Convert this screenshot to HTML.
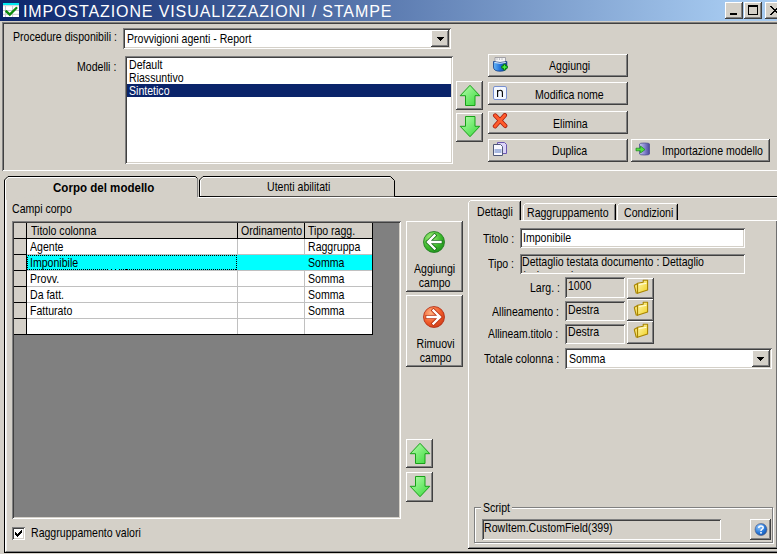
<!DOCTYPE html>
<html><head><meta charset="utf-8">
<style>
*{box-sizing:border-box;margin:0;padding:0}
html,body{width:777px;height:554px;overflow:hidden;background:#d4d0c8}
body{position:relative;font-family:"Liberation Sans",sans-serif;font-size:11px;color:#000}
.a{position:absolute}
.t{position:absolute;font-size:11px;line-height:13px;white-space:pre;transform-origin:0 0;transform:scale(0.96,1.1);margin-top:-1px}
.sunk{position:absolute;box-shadow:inset 1px 1px #808080,inset -1px -1px #fff,inset 2px 2px #404040,inset -2px -2px #d4d0c8}
.btn{position:absolute;background:#d4d0c8;box-shadow:inset -1px -1px #404040,inset 1px 1px #fff,inset -2px -2px #808080}
.etch{position:absolute;border:1px solid #808080;box-shadow:inset 1px 1px #fff,1px 1px #fff}
</style></head><body>

<!-- title bar -->
<div class="a" style="left:0;top:0;width:777px;height:21px;background:linear-gradient(to right,#0a246a 0px,#a6caf0 735px,#a6caf0 777px)"></div>
<svg class="a" style="left:3px;top:3px" width="16" height="14" viewBox="0 0 16 14">
<rect x="0" y="0" width="16" height="14" fill="#fff"/>
<rect x="0" y="0" width="16" height="2.4" fill="#00e8f0"/>
<path d="M0 2.8H16" stroke="#f0c8c8" stroke-width="0.8"/>
<path d="M0 7.5H16M0 11.3H16M2.5 3V14M9.6 3V14" stroke="#c8c8d0" stroke-width="1"/>
<path d="M3.3 8.3L6.8 11.6L13.4 5" stroke="#0c8a0c" stroke-width="2.4" fill="none" stroke-linecap="round"/>
</svg>
<div class="t" style="left:23px;top:2px;font-size:16px;line-height:19px;color:#fff;letter-spacing:0.89px;transform:none;margin-top:0">IMPOSTAZIONE VISUALIZZAZIONI / STAMPE</div>
<div class="btn" style="left:725px;top:2px;width:18px;height:17px"><div class="a" style="left:5px;top:11px;width:7px;height:2px;background:#000"></div></div>
<div class="btn" style="left:744px;top:2px;width:18px;height:17px"><div class="a" style="left:4px;top:3px;width:10px;height:10px;border:1px solid #000;border-top-width:2px"></div></div>
<div class="btn" style="left:765px;top:2px;width:18px;height:17px"><svg class="a" style="left:5px;top:4px" width="10" height="9" shape-rendering="crispEdges"><path d="M0 0h2v1h-2zM8 0h2v1h-2zM1 1h2v1h-2zM7 1h2v1h-2zM2 2h2v1h-2zM6 2h2v1h-2zM3 3h2v1h-2zM5 3h2v1h-2zM4 4h2v1h-2zM4 4h2v1h-2zM5 5h2v1h-2zM3 5h2v1h-2zM6 6h2v1h-2zM2 6h2v1h-2zM7 7h2v1h-2zM1 7h2v1h-2zM8 8h2v1h-2zM0 8h2v1h-2z" fill="#000"/></svg></div>

<!-- top panel -->
<div class="sunk" style="left:2px;top:22px;width:800px;height:149px"></div>
<div class="t" style="left:13px;top:31px">Procedure disponibili :</div>
<div class="sunk" style="left:123px;top:28px;width:328px;height:21px;background:#fff"></div>
<div class="btn" style="left:431px;top:30px;width:18px;height:17px"><svg class="a" style="left:6px;top:7px" width="7" height="4" shape-rendering="crispEdges"><path d="M0 0h7v1h-7zM1 1h5v1h-5zM2 2h3v1h-3zM3 3h1v1h-1z" fill="#000"/></svg></div>
<div class="t" style="left:127px;top:33px">Provvigioni agenti - Report</div>

<div class="t" style="left:77px;top:61px">Modelli :</div>
<div class="sunk" style="left:125px;top:56px;width:328px;height:108px;background:#fff"></div>
<div class="a" style="left:127px;top:84px;width:324px;height:13px;background:#0a246a"></div>
<div class="t" style="left:129px;top:59px">Default</div>
<div class="t" style="left:129px;top:72px">Riassuntivo</div>
<div class="t" style="left:129px;top:85px;color:#fff">Sintetico</div>

<!-- up/down top -->
<div class="btn" style="left:456px;top:81px;width:27px;height:29px" id="upTop"></div>
<div class="btn" style="left:456px;top:113px;width:27px;height:29px" id="dnTop"></div>

<!-- buttons -->
<div class="btn" style="left:488px;top:54px;width:140px;height:23px"></div>
<div class="t" style="left:549px;top:60px">Aggiungi</div>
<div class="btn" style="left:488px;top:82px;width:140px;height:23px"></div>
<div class="t" style="left:535px;top:89px">Modifica nome</div>
<div class="btn" style="left:488px;top:111px;width:140px;height:23px"></div>
<div class="t" style="left:553px;top:118px">Elimina</div>
<div class="btn" style="left:488px;top:139px;width:140px;height:23px"></div>
<div class="t" style="left:552px;top:145px">Duplica</div>
<div class="btn" style="left:631px;top:139px;width:139px;height:23px"></div>
<div class="t" style="left:662px;top:145px">Importazione modello</div>


<!-- main tab control -->
<!-- tab strip baseline -->
<div class="a" style="left:199px;top:196px;width:600px;height:1px;background:#000"></div>
<div class="a" style="left:198px;top:197px;width:600px;height:1px;background:#fff"></div>
<!-- tab body -->
<div class="a" style="left:4px;top:196px;width:800px;height:357px;border-left:1px solid #000;border-bottom:1px solid #000"></div>
<div class="a" style="left:5px;top:197px;width:1px;height:354px;background:#fff"></div><div class="a" style="left:6px;top:197px;width:1px;height:354px;background:#ececea"></div>
<div class="a" style="left:6px;top:551px;width:800px;height:1px;background:#808080"></div>
<!-- active tab -->
<svg class="a" style="left:0;top:170px" width="400" height="30">
<path d="M4.5 30V10L8 6.5H195.5L197.5 8.5" fill="#d4d0c8" stroke="#000"/>
<path d="M5.5 30V10.4L8.4 7.5H195" fill="none" stroke="#fff"/>
<path d="M197.5 9V27" stroke="#808080"/>
<path d="M199.5 26V10L203 6.5H390.5L394.5 10.5V26.5" fill="#d4d0c8" stroke="#000"/>
<path d="M200.5 26V10.4L203.4 7.5H390" fill="none" stroke="#fff"/>
</svg>
<div class="t" style="left:53px;top:182px;font-weight:bold;transform:scale(1.05,1.1)">Corpo del modello</div>
<div class="t" style="left:267px;top:181px">Utenti abilitati</div>
<div class="t" style="left:12px;top:203px">Campi corpo</div>

<!-- grid -->
<div class="sunk" style="left:12px;top:221px;width:389px;height:298px;background:#808080"></div>
<div class="a" style="left:14px;top:223px;width:359px;height:112px;background:#fff"></div>
<div class="a" style="left:14px;top:223px;width:12px;height:111px;background:#d4d0c8"></div>
<div class="a" style="left:27px;top:223px;width:345px;height:15px;background:#d4d0c8"></div>
<div class="a" style="left:27px;top:255px;width:345px;height:15px;background:#00ffff"></div>
<svg class="a" style="left:14px;top:223px" width="359" height="112">
<g stroke="#000" stroke-width="1">
<path d="M12.5 0V112M0 15.5H359M358.5 0V112M0 111.5H359"/>
<path d="M0 31.5H13M0 47.5H13M0 63.5H13M0 79.5H13M0 95.5H13"/>
<path d="M223.5 0V15M290.5 0V15"/>
</g>
<g stroke="#c0c0c0" stroke-width="1">
<path d="M13 31.5H358M13 47.5H358M13 63.5H358M13 79.5H358M13 95.5H358"/>
<path d="M223.5 16V32M290.5 16V32M223.5 47V111M290.5 47V111"/>
</g>
<rect x="13.5" y="32.5" width="209" height="14" fill="none" stroke="#000" stroke-width="1" stroke-dasharray="1 1" shape-rendering="crispEdges"/>
</svg>
<div class="t" style="left:31px;top:225px">Titolo colonna</div>
<div class="t" style="left:241px;top:225px">Ordinamento</div>
<div class="t" style="left:308px;top:225px">Tipo ragg.</div>
<div class="t" style="left:30px;top:241px">Agente</div>
<div class="t" style="left:308px;top:241px">Raggruppa</div>
<div class="t" style="left:30px;top:257px">Imponibile</div>
<div class="t" style="left:308px;top:257px">Somma</div>
<div class="t" style="left:30px;top:273px">Provv.</div>
<div class="t" style="left:308px;top:273px">Somma</div>
<div class="t" style="left:30px;top:289px">Da fatt.</div>
<div class="t" style="left:308px;top:289px">Somma</div>
<div class="t" style="left:30px;top:305px">Fatturato</div>
<div class="t" style="left:308px;top:305px">Somma</div>

<!-- checkbox -->
<div class="sunk" style="left:12px;top:527px;width:13px;height:13px;background:#fff"></div>
<svg class="a" style="left:15px;top:530px" width="7" height="7" shape-rendering="crispEdges"><path d="M0 2h1v3h-1zM1 3h1v3h-1zM2 4h1v3h-1zM3 3h1v3h-1zM4 2h1v3h-1zM5 1h1v3h-1zM6 0h1v3h-1z" fill="#000"/></svg>
<div class="t" style="left:31px;top:527px">Raggruppamento valori</div>

<!-- middle buttons -->
<div class="btn" style="left:406px;top:221px;width:57px;height:71px"></div>
<div class="t" style="left:414px;top:263px;text-align:center;width:43px;line-height:13px">Aggiungi
campo</div>
<div class="btn" style="left:406px;top:295px;width:57px;height:72px"></div>
<div class="t" style="left:415px;top:338px;text-align:center;width:43px;line-height:13px">Rimuovi
campo</div>
<div class="btn" style="left:406px;top:439px;width:27px;height:29px"></div>
<div class="btn" style="left:406px;top:472px;width:27px;height:30px"></div>


<!-- right tab control -->
<div class="a" style="left:468px;top:220px;width:1px;height:329px;background:#fff"></div>
<div class="a" style="left:469px;top:220px;width:320px;height:1px;background:#fff"></div>

<div class="a" style="left:776px;top:221px;width:1px;height:327px;background:#707070"></div>
<div class="a" style="left:469px;top:547px;width:307px;height:1px;background:#808080"></div>
<div class="a" style="left:468px;top:548px;width:309px;height:1px;background:#000"></div>
<svg class="a" style="left:460px;top:196px" width="317" height="30">
<path d="M8.5 25V6.5L10.5 4.5H60.5" fill="none" stroke="#fff"/>
<path d="M60.5 5V25" stroke="#000"/><path d="M59.5 6V25" stroke="#808080"/>
<path d="M63.5 24V9.5L65.5 7.5H154.5" fill="none" stroke="#fff"/>
<path d="M155.5 8V24" stroke="#000"/><path d="M154.5 9V24" stroke="#808080"/>
<path d="M157.5 24V9.5L159.5 7.5H216.5" fill="none" stroke="#fff"/>
<path d="M217.5 8V24" stroke="#000"/><path d="M216.5 9V24" stroke="#808080"/>
</svg>
<div class="a" style="left:469px;top:220px;width:52px;height:1px;background:#d4d0c8"></div>
<div class="t" style="left:477px;top:206px">Dettagli</div>
<div class="t" style="left:527px;top:207px">Raggruppamento</div>
<div class="t" style="left:624px;top:207px">Condizioni</div>

<div class="t" style="left:483px;top:233px">Titolo :</div>
<div class="sunk" style="left:520px;top:228px;width:225px;height:20px;background:#fff"></div>
<div class="t" style="left:523px;top:232px">Imponibile</div>
<div class="t" style="left:488px;top:258px">Tipo :</div>
<div class="sunk" style="left:520px;top:254px;width:225px;height:20px;background:#d4d0c8"></div><div class="a" style="left:522px;top:256px;width:221px;height:16px;overflow:hidden"><div class="t" style="left:0px;top:0px;line-height:13px">Dettaglio testata documento : Dettaglio
(colonna...)</div></div>

<div class="t" style="left:530px;top:282px">Larg. :</div>
<div class="sunk" style="left:565px;top:277px;width:60px;height:21px"></div>
<div class="t" style="left:568px;top:280px">1000</div>
<div class="btn" style="left:627px;top:278px;width:27px;height:21px"></div>
<div class="t" style="left:492px;top:306px">Allineamento :</div>
<div class="sunk" style="left:565px;top:301px;width:60px;height:20px"></div>
<div class="t" style="left:568px;top:304px">Destra</div>
<div class="btn" style="left:627px;top:299px;width:27px;height:22px"></div>
<div class="t" style="left:488px;top:328px;transform:scale(0.94,1.1)">Allineam.titolo :</div>
<div class="sunk" style="left:565px;top:324px;width:60px;height:20px"></div>
<div class="t" style="left:568px;top:326px">Destra</div>
<div class="btn" style="left:627px;top:321px;width:27px;height:23px"></div>

<div class="t" style="left:484px;top:353px;transform:scale(0.975,1.1)">Totale colonna :</div>
<div class="sunk" style="left:565px;top:348px;width:207px;height:21px;background:#fff"></div>
<div class="btn" style="left:752px;top:350px;width:18px;height:17px"><svg class="a" style="left:5px;top:7px" width="7" height="4" shape-rendering="crispEdges"><path d="M0 0h7v1h-7zM1 1h5v1h-5zM2 2h3v1h-3zM3 3h1v1h-1z" fill="#000"/></svg></div>
<div class="t" style="left:569px;top:353px">Somma</div>

<div class="etch" style="left:474px;top:507px;width:299px;height:36px"></div>
<div class="a" style="left:481px;top:500px;width:31px;height:14px;background:#d4d0c8"></div>
<div class="t" style="left:483px;top:502px">Script</div>
<div class="sunk" style="left:482px;top:519px;width:239px;height:21px"></div>
<div class="t" style="left:484px;top:522px">RowItem.CustomField(399)</div>
<div class="btn" style="left:750px;top:519px;width:21px;height:21px"></div>


<svg class="a" style="left:0;top:0" width="0" height="0"><defs>
<linearGradient id="gUp" x1="0" y1="0" x2="1" y2="1"><stop offset="0" stop-color="#b8ffb0"/><stop offset="1" stop-color="#38d838"/></linearGradient>
<radialGradient id="gG" cx="0.35" cy="0.3" r="0.8"><stop offset="0" stop-color="#a8f080"/><stop offset="0.6" stop-color="#3cb82c"/><stop offset="1" stop-color="#1e8c1e"/></radialGradient>
<radialGradient id="gO" cx="0.35" cy="0.3" r="0.8"><stop offset="0" stop-color="#ffb080"/><stop offset="0.6" stop-color="#f05a28"/><stop offset="1" stop-color="#c83818"/></radialGradient>
<radialGradient id="gB" cx="0.35" cy="0.3" r="0.8"><stop offset="0" stop-color="#90c8ff"/><stop offset="0.6" stop-color="#2878d8"/><stop offset="1" stop-color="#1050a8"/></radialGradient>
<linearGradient id="gBk" x1="0" y1="0" x2="1" y2="0"><stop offset="0" stop-color="#68b8f8"/><stop offset="0.5" stop-color="#2070d8"/><stop offset="1" stop-color="#103c98"/></linearGradient>
<linearGradient id="gF" x1="0" y1="0" x2="1" y2="1"><stop offset="0" stop-color="#fff8b0"/><stop offset="1" stop-color="#f0d020"/></linearGradient>
<linearGradient id="gDb" x1="0" y1="0" x2="1" y2="0"><stop offset="0" stop-color="#c8c8f0"/><stop offset="0.5" stop-color="#8888d0"/><stop offset="1" stop-color="#484898"/></linearGradient>
</defs></svg>
<!-- green arrows -->
<svg class="a" style="left:456px;top:81px" width="27" height="29"><path d="M14 4.3L23.8 14.7H19V24.5H9.5V14.7H4.2Z" fill="url(#gUp)" stroke="#18a018" stroke-width="1" stroke-linejoin="miter"/></svg>
<svg class="a" style="left:456px;top:113px" width="27" height="29"><path d="M14 23.7L23.8 13.3H19V3.5H9.5V13.3H4.2Z" fill="url(#gUp)" stroke="#18a018" stroke-width="1"/></svg>
<svg class="a" style="left:406px;top:439px" width="27" height="29"><path d="M14 4.3L23.8 14.7H19V24.5H9.5V14.7H4.2Z" fill="url(#gUp)" stroke="#18a018" stroke-width="1"/></svg>
<svg class="a" style="left:406px;top:472px" width="27" height="30"><path d="M14 24.7L23.8 14.3H19V4.5H9.5V14.3H4.2Z" fill="url(#gUp)" stroke="#18a018" stroke-width="1"/></svg>
<!-- circle arrows -->
<svg class="a" style="left:423px;top:231px" width="22" height="22"><circle cx="11" cy="11" r="10.5" fill="url(#gG)" stroke="#1a7a1a" stroke-width="0.8"/><path d="M11.5 4.5L5 11L11.5 17.5M5.5 11H17.5" fill="none" stroke="#1a701a" stroke-width="4" stroke-linecap="square"/><path d="M11.5 4.5L5 11L11.5 17.5M5.5 11H17.5" fill="none" stroke="#fff" stroke-width="2.4" stroke-linecap="square"/></svg>
<svg class="a" style="left:423px;top:306px" width="22" height="22"><circle cx="11" cy="11" r="10.5" fill="url(#gO)" stroke="#b02810" stroke-width="0.8"/><path d="M10.5 4.5L17 11L10.5 17.5M4.5 11H16.5" fill="none" stroke="#b83010" stroke-width="4" stroke-linecap="square"/><path d="M10.5 4.5L17 11L10.5 17.5M4.5 11H16.5" fill="none" stroke="#fff" stroke-width="2.4" stroke-linecap="square"/></svg>
<!-- Aggiungi icon -->
<svg class="a" style="left:492px;top:56px" width="17" height="17">
<path d="M3 1.5H13.5V6.5H3Z" fill="#f4f4f4" stroke="#909098" stroke-width="0.8"/>
<path d="M5 2.2V4M7.5 2.2V4M10 2.2V4" stroke="#b0b0b8" stroke-width="0.8"/>
<path d="M1.5 5.5Q8 7.5 14.8 5.5V11Q14.8 15.2 8 15.2Q1.5 15.2 1.5 11Z" fill="url(#gBk)" stroke="#0c3a88" stroke-width="0.8"/>
<path d="M2.5 6.5Q8 8 13.8 6.5" fill="none" stroke="#e8f0ff" stroke-width="1"/>
<path d="M9.8 10H11.4V8.3H13.6V10H15.3V12.2H13.6V13.9H11.4V12.2H9.8Z" fill="#48f048" stroke="#087808" stroke-width="1"/>
</svg>
<!-- Modifica nome icon -->
<svg class="a" style="left:493px;top:86px" width="14" height="14">
<rect x="0.5" y="0.5" width="13" height="13" rx="1.5" fill="#f4f8ff" stroke="#7890d0" stroke-width="1"/>
<path d="M4.6 11V4M4.6 5.8Q5.6 4.2 7.3 4.2Q9.4 4.2 9.4 6.4V11" fill="none" stroke="#000" stroke-width="1.1"/>
</svg>
<!-- Elimina icon -->
<svg class="a" style="left:492px;top:113px" width="17" height="16">
<path d="M3.2 2.5L13.2 12.8M12.8 2.2L3 13.2" fill="none" stroke="#a82010" stroke-width="4.4" stroke-linecap="round"/>
<path d="M3.2 2.5L13.2 12.8M12.8 2.2L3 13.2" fill="none" stroke="#ff5c2c" stroke-width="2.8" stroke-linecap="round"/>
</svg>
<!-- Duplica icon -->
<svg class="a" style="left:492px;top:141px" width="16" height="16">
<path d="M5.5 1.5H12.5L14.5 3.5V12.5H5.5Z" fill="#dcd4f8" stroke="#6a58b0" stroke-width="1"/>
<path d="M1.5 3.5H8.5L10.5 5.5V14.5H1.5Z" fill="#f8f8ff" stroke="#505878" stroke-width="1"/>
<rect x="2.5" y="8" width="7" height="4" fill="#a8b8e0"/>
</svg>
<!-- Importazione icon -->
<svg class="a" style="left:635px;top:142px" width="16" height="14">
<path d="M4.5 2Q4.5 1 9.5 1Q14.5 1 14.5 2V12Q14.5 13 9.5 13Q4.5 13 4.5 12Z" fill="url(#gDb)" stroke="#505090" stroke-width="0.8"/>
<path d="M1 6.2H5.5V4L10 7.6L5.5 11V8.8H1Z" fill="#50e040" stroke="#188818" stroke-width="0.7"/>
</svg>
<!-- folders -->
<svg class="a" style="left:632px;top:278px" width="18" height="18"><path d="M5.5 5.3L11.2 4.2V2.3H15.6V12L5.5 15.3Z" fill="url(#gF)" stroke="#a88400" stroke-width="1.1" stroke-linejoin="round"/><path d="M7 6.5L14.4 5.4" stroke="#fffce0" stroke-width="1"/><path d="M2.4 7.2L5.5 5.5V15.3L4.2 15L2.4 8.2Z" fill="#f8e470" stroke="#a88400" stroke-width="1.1" stroke-linejoin="round"/></svg>
<svg class="a" style="left:632px;top:300px" width="18" height="18"><path d="M5.5 5.3L11.2 4.2V2.3H15.6V12L5.5 15.3Z" fill="url(#gF)" stroke="#a88400" stroke-width="1.1" stroke-linejoin="round"/><path d="M7 6.5L14.4 5.4" stroke="#fffce0" stroke-width="1"/><path d="M2.4 7.2L5.5 5.5V15.3L4.2 15L2.4 8.2Z" fill="#f8e470" stroke="#a88400" stroke-width="1.1" stroke-linejoin="round"/></svg>
<svg class="a" style="left:632px;top:322px" width="18" height="18"><path d="M5.5 5.3L11.2 4.2V2.3H15.6V12L5.5 15.3Z" fill="url(#gF)" stroke="#a88400" stroke-width="1.1" stroke-linejoin="round"/><path d="M7 6.5L14.4 5.4" stroke="#fffce0" stroke-width="1"/><path d="M2.4 7.2L5.5 5.5V15.3L4.2 15L2.4 8.2Z" fill="#f8e470" stroke="#a88400" stroke-width="1.1" stroke-linejoin="round"/></svg>
<!-- help -->
<svg class="a" style="left:754px;top:523px" width="14" height="14"><circle cx="7" cy="6.5" r="6" fill="url(#gB)" stroke="#505878" stroke-width="0.6"/><path d="M4.8 5Q4.8 3 7 3Q9.2 3 9.2 4.8Q9.2 5.8 7.8 6.4Q7 6.8 7 8" fill="none" stroke="#fff" stroke-width="1.5"/><rect x="6.2" y="9" width="1.6" height="1.6" fill="#fff"/></svg>

</body></html>
